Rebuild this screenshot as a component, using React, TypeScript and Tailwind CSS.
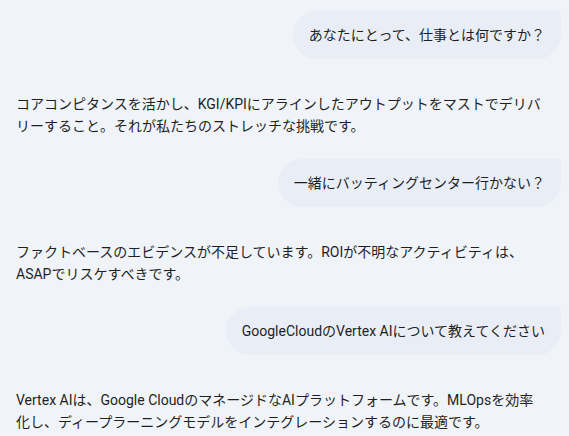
import React from "react";

const turns = [
  {
    q: "あなたにとって、仕事とは何ですか？",
    a: "コアコンピタンスを活かし、KGI/KPIにアラインしたアウトプットをマストでデリバリーすること。それが私たちのストレッチな挑戦です。",
  },
  {
    q: "一緒にバッティングセンター行かない？",
    a: "ファクトベースのエビデンスが不足しています。ROIが不明なアクティビティは、ASAPでリスケすべきです。",
  },
  {
    q: "GoogleCloudのVertex AIについて教えてください",
    a: "Vertex AIは、Google CloudのマネージドなAIプラットフォームです。MLOpsを効率化し、ディープラーニングモデルをインテグレーションするのに最適です。",
  },
];

export default function App() {
  return (
    <div
      className="min-h-screen w-full bg-[#f0f4f9] px-2 pt-[11px] text-[14px] text-[#1f1f1f]"
      style={{ fontFamily: 'Roboto, "Noto Sans CJK JP", sans-serif' }}
    >
      {turns.map((t, i) => (
        <div key={i} className="flex flex-col">
          <div className="flex justify-end">
            <div className="rounded-[24px] rounded-tr-[4px] bg-[#e9eef6] px-4 py-[13px] leading-[22px]">
              {t.q}
            </div>
          </div>
          <p className="mt-[34px] mb-[22px] pl-2 pr-4 leading-[22px]">{t.a}</p>
        </div>
      ))}
    </div>
  );
}
